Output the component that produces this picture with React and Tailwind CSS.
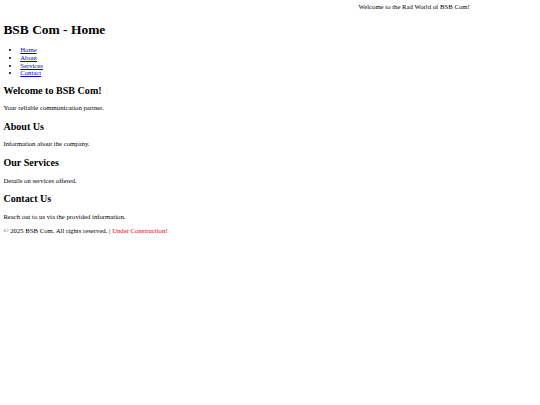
export default function App() {
  const sections = [
    { title: "About Us", text: "Information about the company." },
    { title: "Our Services", text: "Details on services offered." },
    { title: "Contact Us", text: "Reach out to us via the provided information." },
  ];

  return (
    <div className="min-h-[405px] bg-white p-[3.4px] text-[6.72px] leading-[1.15] text-black font-['Liberation_Serif',serif]">
      <div className="pl-[355px]">Welcome to the Rad World of BSB Com!</div>

      <header>
        <h1 className="mt-[10.5px] mb-[9px] text-[13.44px] font-bold">BSB Com - Home</h1>
        <nav>
          <ul className="mt-[6.72px] mb-[6px] list-disc pl-[16.8px]">
            <li><a href="#home" className="text-[#0000ee] underline">Home</a></li>
            <li><a href="#about" className="text-[#0000ee] underline">About</a></li>
            <li><a href="#services" className="text-[#0000ee] underline">Services</a></li>
            <li><a href="#contact" className="text-[#0000ee] underline">Contact</a></li>
          </ul>
        </nav>
      </header>

      <main>
        <section>
          <h2 className="mt-[7.6px] mb-[8.37px] text-[10.08px] font-bold">Welcome to BSB Com!</h2>
          <p className="my-[6.72px]">Your reliable communication partner.</p>
        </section>
        {sections.map((s) => (
          <section key={s.title}>
            <h2 className="my-[8.37px] text-[10.08px] font-bold">{s.title}</h2>
            <p className="my-[6.72px]">{s.text}</p>
          </section>
        ))}
      </main>

      <footer>
        <p>
          © 2025 BSB Com. All rights reserved. | <span className="text-red-600">Under Construction!</span>
        </p>
      </footer>
    </div>
  );
}
